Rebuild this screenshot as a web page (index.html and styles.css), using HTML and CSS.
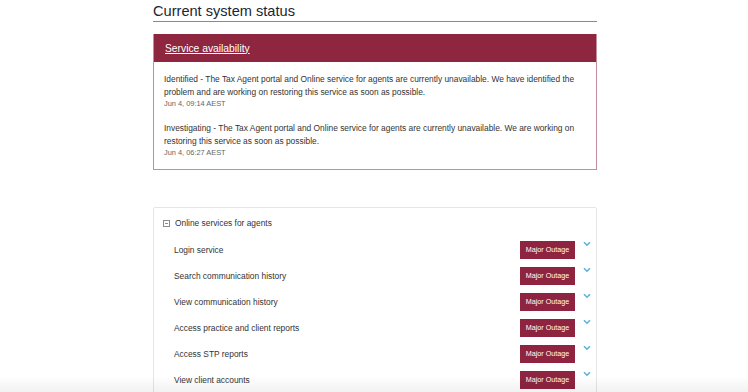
FILE: index.html
```html
<!DOCTYPE html>
<html lang="en">
<head>
  <meta charset="UTF-8" />
  <meta name="viewport" content="width=device-width, initial-scale=1.0" />
  <title>Current system status</title>
  <link rel="stylesheet" href="styles.css">
</head>
<body>
  <div class="page">
    <h1 class="title">Current system status</h1>

    <div class="incident">
      <div class="incident-head">
        <a href="#">Service availability</a>
      </div>
      <div class="incident-body">
        <div class="update">
          <p>Identified - The Tax Agent portal and Online service for agents are currently unavailable. We have identified the problem and are working on restoring this service as soon as possible.</p>
          <small>Jun 4, 09:14 AEST</small>
        </div>
        <div class="update">
          <p>Investigating - The Tax Agent portal and Online service for agents are currently unavailable. We are working on restoring this service as soon as possible.</p>
          <small>Jun 4, 06:27 AEST</small>
        </div>
      </div>
    </div>

    <div class="group">
      <div class="group-head">
        <svg class="toggle" width="7" height="7" viewBox="0 0 7 7">
          <rect x="0.5" y="0.5" width="6" height="6" fill="none" stroke="#8c8c8c" stroke-width="1"/>
          <line x1="2" y1="3.5" x2="5" y2="3.5" stroke="#8c8c8c" stroke-width="1"/>
        </svg>
        <span>Online services for agents</span>
      </div>
      <div class="row">
        <span class="name">Login service</span>
        <span class="badge">Major Outage</span>
        <svg class="chev" width="8" height="6" viewBox="0 0 8 6"><path d="M1 1.2 L4 4.2 L7 1.2" fill="none" stroke="#5db3d8" stroke-width="1.6"/></svg>
      </div>
      <div class="row">
        <span class="name">Search communication history</span>
        <span class="badge">Major Outage</span>
        <svg class="chev" width="8" height="6" viewBox="0 0 8 6"><path d="M1 1.2 L4 4.2 L7 1.2" fill="none" stroke="#5db3d8" stroke-width="1.6"/></svg>
      </div>
      <div class="row">
        <span class="name">View communication history</span>
        <span class="badge">Major Outage</span>
        <svg class="chev" width="8" height="6" viewBox="0 0 8 6"><path d="M1 1.2 L4 4.2 L7 1.2" fill="none" stroke="#5db3d8" stroke-width="1.6"/></svg>
      </div>
      <div class="row">
        <span class="name">Access practice and client reports</span>
        <span class="badge">Major Outage</span>
        <svg class="chev" width="8" height="6" viewBox="0 0 8 6"><path d="M1 1.2 L4 4.2 L7 1.2" fill="none" stroke="#5db3d8" stroke-width="1.6"/></svg>
      </div>
      <div class="row">
        <span class="name">Access STP reports</span>
        <span class="badge">Major Outage</span>
        <svg class="chev" width="8" height="6" viewBox="0 0 8 6"><path d="M1 1.2 L4 4.2 L7 1.2" fill="none" stroke="#5db3d8" stroke-width="1.6"/></svg>
      </div>
      <div class="row">
        <span class="name">View client accounts</span>
        <span class="badge">Major Outage</span>
        <svg class="chev" width="8" height="6" viewBox="0 0 8 6"><path d="M1 1.2 L4 4.2 L7 1.2" fill="none" stroke="#5db3d8" stroke-width="1.6"/></svg>
      </div>
    </div>
  </div>
  <div class="fade"></div>
</body>
</html>
```

FILE: styles.css
```css
body {
  margin: 0;
  padding-left: 2px;
  background: #fff;
  font-family: "Liberation Sans", Arial, Helvetica, sans-serif;
  color: #333;
}
.page {
  width: 444px;
  margin: 0 auto;
  padding-top: 3px;
}
.title {
  margin: 0;
  font-size: 14.6px;
  line-height: 17px;
  font-weight: normal;
  color: #1b2533;
  padding-bottom: 1px;
  border-bottom: 1px solid #8a8a8a;
}
.incident {
  margin-top: 12px;
  border: 1px solid #c18e9b;
  border-top: none;
}
.incident-head {
  background: #8f2640;
  height: 28px;
  display: flex;
  align-items: center;
  padding-left: 11px;
}
.incident-head a {
  color: #fff;
  font-size: 10.3px;
  text-decoration: underline;
}
.incident-body {
  padding: 11px 10px 10px;
}
.update + .update {
  margin-top: 12px;
}
.update p {
  margin: 0;
  font-size: 8.4px;
  line-height: 12.5px;
  color: #333;
}
.update small {
  display: block;
  font-size: 7.4px;
  line-height: 12px;
  color: #666;
}
.group {
  margin-top: 37px;
  border: 1px solid #e6e6e6;
  border-radius: 2px;
  padding: 8px 5px 8px 9px;
}
.group-head {
  display: flex;
  align-items: center;
  gap: 5px;
  height: 14px;
  font-size: 8.4px;
  color: #333;
  margin-bottom: 7px;
}
.row {
  display: flex;
  align-items: center;
  height: 26px;
  padding-left: 11px;
  font-size: 8.4px;
  color: #333;
}
.name {
  flex: 1;
}
.badge {
  background: #8e2440;
  color: #fff;
  font-size: 7.2px;
  height: 18px;
  line-height: 18px;
  padding: 0 5px;
  box-sizing: border-box;
  width: 55px;
  text-align: center;
}
.chev {
  align-self: flex-start;
  margin: 4px 0 0 8px;
}
.fade {
  position: fixed;
  left: 0;
  right: 0;
  bottom: 0;
  height: 16px;
  background: linear-gradient(to bottom, rgba(0,0,0,0), rgba(0,0,0,0.05));
  pointer-events: none;
}
```
